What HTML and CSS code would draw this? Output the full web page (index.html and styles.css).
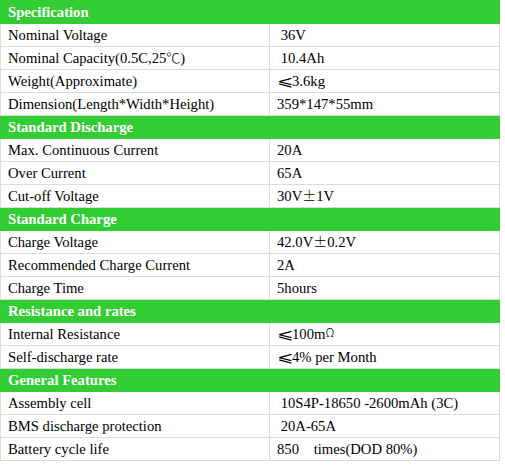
FILE: index.html
```html
<!DOCTYPE html>
<html lang="en">
<head>
    <meta charset="UTF-8">
    <meta name="viewport" content="width=device-width, initial-scale=1.0">
    <title>Battery Specification</title>
    <link rel="stylesheet" href="styles.css">
</head>
<body>
    <table class="spec-table">
        <colgroup>
            <col class="col-name">
            <col class="col-value">
        </colgroup>
        <tr class="section"><td colspan="2">Specification</td></tr>
        <tr><td>Nominal Voltage</td><td>&nbsp;36V</td></tr>
        <tr><td>Nominal Capacity(0.5C,25<span class="sym">℃</span>)</td><td>&nbsp;10.4Ah</td></tr>
        <tr><td>Weight(Approximate)</td><td><span class="sym leq">⩽</span>3.6kg</td></tr>
        <tr><td>Dimension(Length*Width*Height)</td><td>359*147*55mm</td></tr>

        <tr class="section"><td colspan="2">Standard Discharge</td></tr>
        <tr><td>Max. Continuous Current</td><td>20A</td></tr>
        <tr><td>Over Current</td><td>65A</td></tr>
        <tr><td>Cut-off Voltage</td><td>30V<span class="sym">±</span>1V</td></tr>

        <tr class="section"><td colspan="2">Standard Charge</td></tr>
        <tr><td>Charge Voltage</td><td>42.0V<span class="sym">±</span>0.2V</td></tr>
        <tr><td>Recommended Charge Current</td><td>2A</td></tr>
        <tr><td>Charge Time</td><td>5hours</td></tr>

        <tr class="section"><td colspan="2">Resistance and rates</td></tr>
        <tr><td>Internal Resistance</td><td><span class="sym leq">⩽</span>100m<span class="sym ohm">Ω</span></td></tr>
        <tr><td>Self-discharge rate</td><td><span class="sym leq">⩽</span>4% per Month</td></tr>

        <tr class="section"><td colspan="2">General Features</td></tr>
        <tr><td>Assembly cell</td><td>&nbsp;10S4P-18650 -2600mAh (3C)</td></tr>
        <tr><td>BMS discharge protection</td><td>&nbsp;20A-65A</td></tr>
        <tr><td>Battery cycle life</td><td>850&nbsp;&nbsp;&nbsp; times(DOD 80%)</td></tr>
    </table>
</body>
</html>
```

FILE: styles.css
```css
body {
    margin: 0;
    padding: 0;
    background-color: #fff;
    font-family: "Liberation Serif", "Times New Roman", serif;
    font-size: 11pt;
    color: #000;
}

.spec-table {
    border-collapse: collapse;
    width: 500px;
}

.col-name {
    width: 269px;
}

.spec-table td {
    border: 1px solid #dcdcdc;
    padding: 0 7px;
    height: 22px;
    line-height: 21px;
    white-space: nowrap;
}

.section td {
    background-color: #32cd32;
    border-color: #32cd32;
    color: #fff;
    font-weight: bold;
}

.sym {
    font-family: "Noto Sans CJK SC", "DejaVu Sans", sans-serif;
    font-size: 14px;
    font-weight: 300;
    line-height: 10px;
}

.leq {
    display: inline-block;
    width: 15px;
    transform: scaleX(1.4);
    transform-origin: left center;
}

.ohm {
    font-size: 12px;
    vertical-align: 2px;
}
```
